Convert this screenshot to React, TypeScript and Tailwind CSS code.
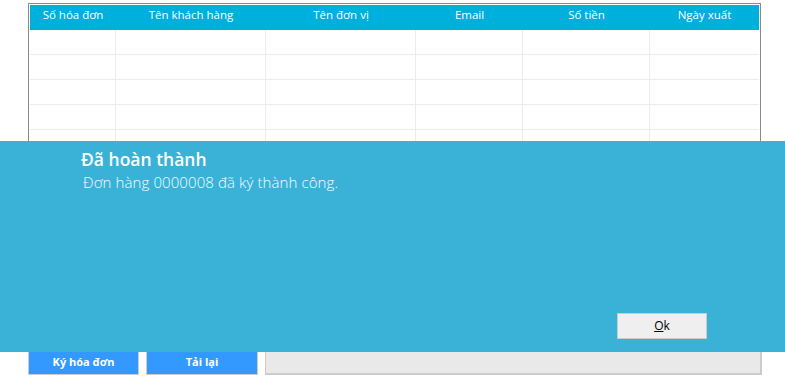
import React from "react";

const cols = [
  { name: "Số hóa đơn", w: "w-[86px]" },
  { name: "Tên khách hàng", w: "w-[150px]" },
  { name: "Tên đơn vị", w: "w-[150px]" },
  { name: "Email", w: "w-[107px]" },
  { name: "Số tiền", w: "w-[127px]" },
  { name: "Ngày xuất", w: "flex-1" },
];

export default function App() {
  const rows = Array.from({ length: 13 });
  return (
    <div
      className="relative w-[785px] h-[391px] bg-white overflow-hidden"
      style={{ fontFamily: '"Open Sans", "Noto Sans", sans-serif' }}
    >
      <div className="pt-[3px] pl-[28px]">
        <div className="w-[733px] h-[346px] border border-[#8a8a8a] p-px overflow-hidden">
          <div className="flex h-[25px] bg-[#00b0dc] text-white text-[11.5px]">
            {cols.map((c, i) => (
              <div key={i} className={`${c.w} flex items-start justify-center pt-[1px] leading-[18px]`}>
                {c.name}
              </div>
            ))}
          </div>
          {rows.map((_, r) => (
            <div key={r} className="flex h-[25px] border-b border-[#ececec]">
              {cols.map((c, i) => (
                <div key={i} className={`${c.w} ${i < cols.length - 1 ? "border-r border-[#ececec]" : ""}`} />
              ))}
            </div>
          ))}
        </div>
        <div className="flex gap-[7px] h-[26px]">
          <div className="w-[111px] bg-[#3399ff] border border-[#cccccc] text-white text-[11px] font-bold flex items-center justify-center">
            Ký hóa đơn
          </div>
          <div className="w-[112px] bg-[#3399ff] border border-[#cccccc] text-white text-[11px] font-bold flex items-center justify-center">
            Tải lại
          </div>
          <div className="w-[497px] bg-[#e9e9e9] border border-[#cccccc] border-b-2 border-r-2" />
        </div>
      </div>

      <div className="absolute left-0 top-[141px] w-[785px] h-[211px] bg-[#3ab2d8]">
        <div className="pl-[81px] pt-[6px] text-white">
          <div className="text-[17.5px] font-semibold leading-[24px]">Đã hoàn thành</div>
          <div className="pl-[2px] text-[15px] font-light tracking-[0.1px] leading-[20px] mt-[1px] text-[#f4fbfe]">
            Đơn hàng 0000008 đã ký thành công.
          </div>
        </div>
        <div className="absolute left-[617px] top-[172px] w-[90px] h-[26px] bg-[#efefef] border border-[#cccccc] flex items-center justify-center text-[12px] text-black">
          <span className="underline">O</span>k
        </div>
      </div>
    </div>
  );
}
